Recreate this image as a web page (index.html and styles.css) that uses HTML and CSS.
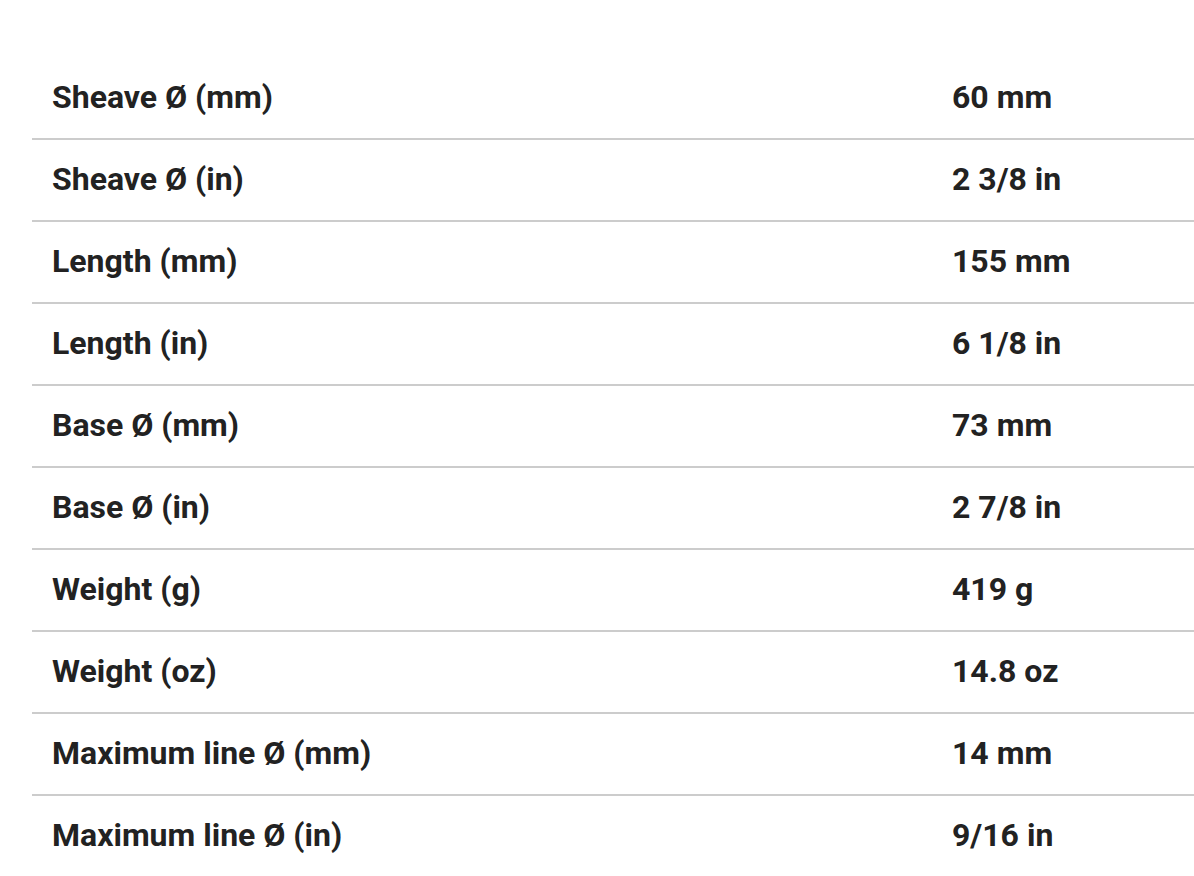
FILE: index.html
```html
<!DOCTYPE html>
<html>
<head>
<meta charset="utf-8">
<link rel="stylesheet" href="styles.css">
</head>
<body>
<div class="specs">
  <div class="row"><div class="label">Sheave Ø (mm)</div><div class="value">60 mm</div></div>
  <div class="row"><div class="label">Sheave Ø (in)</div><div class="value">2 3/8 in</div></div>
  <div class="row"><div class="label">Length (mm)</div><div class="value">155 mm</div></div>
  <div class="row"><div class="label">Length (in)</div><div class="value">6 1/8 in</div></div>
  <div class="row"><div class="label">Base Ø (mm)</div><div class="value">73 mm</div></div>
  <div class="row"><div class="label">Base Ø (in)</div><div class="value">2 7/8 in</div></div>
  <div class="row"><div class="label">Weight (g)</div><div class="value">419 g</div></div>
  <div class="row"><div class="label">Weight (oz)</div><div class="value">14.8 oz</div></div>
  <div class="row"><div class="label">Maximum line Ø (mm)</div><div class="value">14 mm</div></div>
  <div class="row"><div class="label">Maximum line Ø (in)</div><div class="value">9/16 in</div></div>
</div>
</body>
</html>
```
FILE: styles.css
```css
html, body {
  margin: 0;
  padding: 0;
  background: #fff;
}
body {
  font-family: Roboto, "Liberation Sans", sans-serif;
  color: #222;
  overflow: hidden;
}
.specs {
  margin: 58px 0 0 32px;
  display: flex;
  flex-direction: column;
}
.row {
  display: grid;
  grid-template-columns: 900px 1fr;
  height: 82px;
  padding-bottom: 2px;
  align-items: center;
  border-bottom: 2px solid #cccccc;
  box-sizing: border-box;
}
.label, .value {
  padding-left: 20px;
  font-size: 32px;
  font-weight: 700;
  line-height: 1;
}
```
